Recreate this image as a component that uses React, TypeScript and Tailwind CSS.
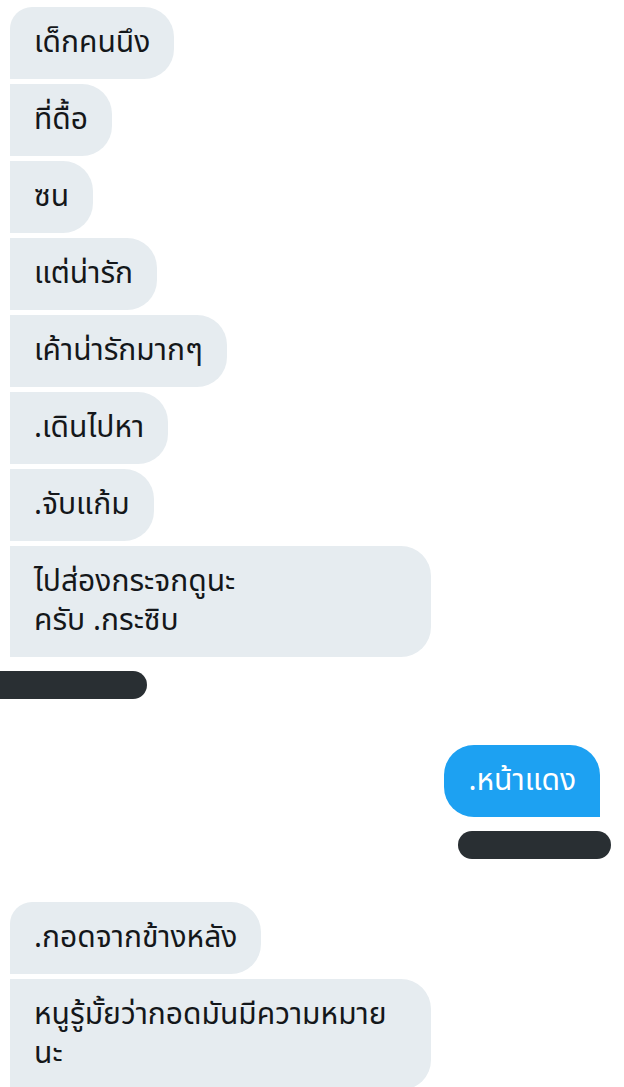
import React from 'react';

// --- BUBBLES ---
type Side = 'left' | 'right';

interface BubbleProps {
  children: React.ReactNode;
  side?: Side;
  first?: boolean;
  wide?: boolean;
}

const Bubble: React.FC<BubbleProps> = ({ children, side = 'left', first = false, wide = false }) => {
  const base = `px-[24px] py-[16.5px] text-[30px] leading-[39px] ${wide ? 'w-[421px]' : 'w-fit'}`;
  const look = side === 'left'
    ? `bg-[#e6ecf0] text-[#14171a] rounded-r-[30px] ${first ? 'rounded-tl-[22px]' : ''}`
    : "bg-[#1da1f2] text-white rounded-t-[30px] rounded-bl-[30px] mr-[24px]";
  return <div className={`${base} ${look}`}>{children}</div>;
};

// redacted name / timestamp
const Bar: React.FC<{ className?: string }> = ({ className = '' }) => (
  <div className={`h-[28px] bg-[#292f33] rounded-full ${className}`} />
);

export default function App() {
  return (
    <div
      className="w-[624px] h-[1087px] overflow-hidden bg-white"
      style={{ fontFamily: '"Noto Sans Thai", "Noto Sans", "DejaVu Sans", sans-serif' }}
    >
      <div className="flex flex-col gap-[5px] pl-[10px] pt-[7px]">
        <Bubble first>เด็กคนนึง</Bubble>
        <Bubble>ที่ดื้อ</Bubble>
        <Bubble>ซน</Bubble>
        <Bubble>แต่น่ารัก</Bubble>
        <Bubble>เค้าน่ารักมากๆ</Bubble>
        <Bubble>.เดินไปหา</Bubble>
        <Bubble>.จับแก้ม</Bubble>
        <Bubble wide>ไปส่องกระจกดูนะ<br />ครับ .กระซิบ</Bubble>
      </div>
      <Bar className="mt-[14px] w-[147px] rounded-l-none" />

      <div className="flex flex-col items-end mt-[46px]">
        <Bubble side="right">.หน้าแดง</Bubble>
        <Bar className="mt-[14px] mr-[13px] w-[153px]" />
      </div>

      <div className="flex flex-col gap-[5px] pl-[10px] mt-[43px]">
        <Bubble first>.กอดจากข้างหลัง</Bubble>
        <Bubble wide>หนูรู้มั้ยว่ากอดมันมีความหมาย<br />นะ</Bubble>
      </div>
    </div>
  );
}
